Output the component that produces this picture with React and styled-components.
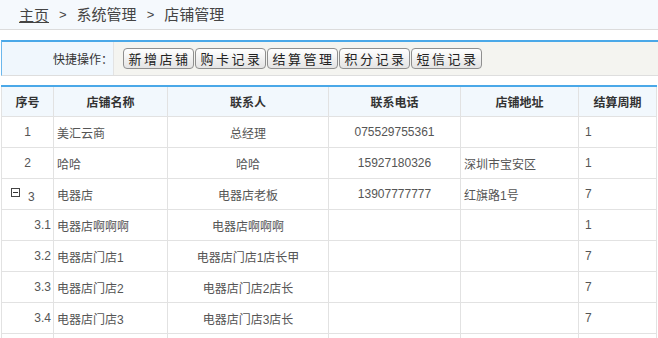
import React from 'react';
import styled, { createGlobalStyle } from 'styled-components';

const GlobalStyle = createGlobalStyle`
  body {
    margin: 0;
    background: #fff;
    font-family: 'Liberation Sans', 'Noto Sans CJK SC', sans-serif;
    color: #555;
  }
`;

const stores = [
  { no: '1', name: '美汇云商', contact: '总经理', phone: '075529755361', address: '', cycle: '1' },
  { no: '2', name: '哈哈', contact: '哈哈', phone: '15927180326', address: '深圳市宝安区', cycle: '1' },
  { no: '3', name: '电器店', contact: '电器店老板', phone: '13907777777', address: '红旗路1号', cycle: '7', parent: true },
  { no: '3.1', name: '电器店啊啊啊', contact: '电器店啊啊啊', phone: '', address: '', cycle: '1', child: true },
  { no: '3.2', name: '电器店门店1', contact: '电器店门店1店长甲', phone: '', address: '', cycle: '7', child: true },
  { no: '3.3', name: '电器店门店2', contact: '电器店门店2店长', phone: '', address: '', cycle: '7', child: true },
  { no: '3.4', name: '电器店门店3', contact: '电器店门店3店长', phone: '', address: '', cycle: '7', child: true },
  { no: '', name: '', contact: '', phone: '', address: '', cycle: '', child: true },
];

const quickActions = ['新增店铺', '购卡记录', '结算管理', '积分记录', '短信记录'];

const App = () => {
  return (
    <>
      <GlobalStyle />
      <Breadcrumb>
        <HomeLink href="#">主页</HomeLink>
        <Sep>&gt;</Sep>
        <span>系统管理</span>
        <Sep>&gt;</Sep>
        <span>店铺管理</span>
      </Breadcrumb>
      <Content>
        <Toolbar>
          <ToolLabel>快捷操作：</ToolLabel>
          <ToolButtons>
            {quickActions.map((a) => (
              <ActionButton key={a}>{a}</ActionButton>
            ))}
          </ToolButtons>
        </Toolbar>
        <Table>
          <colgroup>
            <col style={{ width: 52 }} />
            <col style={{ width: 114 }} />
            <col style={{ width: 161 }} />
            <col style={{ width: 132 }} />
            <col style={{ width: 118 }} />
            <col />
          </colgroup>
          <thead>
            <tr>
              <Th>序号</Th>
              <Th>店铺名称</Th>
              <Th>联系人</Th>
              <Th>联系电话</Th>
              <Th>店铺地址</Th>
              <Th>结算周期</Th>
            </tr>
          </thead>
          <tbody>
            {stores.map((s, i) => (
              <tr key={i}>
                <NoCell $child={s.child} $parent={s.parent}>
                  {s.parent && <Collapse />}
                  {s.parent ? <Lowered>{s.no}</Lowered> : s.no}
                </NoCell>
                <Td $align="left">{s.name}</Td>
                <Td>{s.contact}</Td>
                <Td>{s.phone}</Td>
                <Td $align="left">{s.address}</Td>
                <Td $align="left" $pad="6px">{s.cycle}</Td>
              </tr>
            ))}
          </tbody>
        </Table>
      </Content>
    </>
  );
};

const Breadcrumb = styled.div`
  height: 29px;
  background: #f5f9fd;
  border-bottom: 1px solid #dcdcdc;
  padding-left: 19px;
  display: flex;
  align-items: center;
  gap: 10px;
  font-size: 15px;
  color: #444;
  span {
    line-height: 22px;
  }
`;
const HomeLink = styled.a`
  color: #444;
  text-decoration: underline;
`;
const Sep = styled.span`
  font-size: 13px;
`;
const Content = styled.div`
  padding: 10px 0 0 1px;
`;
const Toolbar = styled.div`
  display: flex;
  height: 33px;
  border-top: 2px solid #4aa8e8;
  border-left: 1px solid #6bb7ec;
  border-bottom: 1px solid #dedede;
  background: #f4f4f0;
`;
const ToolLabel = styled.div`
  width: 112px;
  flex-shrink: 0;
  background: #f0f7fd;
  border-right: 1px solid #e3e3e3;
  display: flex;
  align-items: center;
  justify-content: flex-end;
  padding-right: 0;
  box-sizing: border-box;
  font-family: 'Noto Sans CJK SC', sans-serif;
  font-size: 12px;
  color: #333;
`;
const ToolButtons = styled.div`
  display: flex;
  align-items: center;
  gap: 1px;
  padding-left: 9px;
`;
const ActionButton = styled.button`
  height: 21px;
  width: 71px;
  padding: 0;
  border: 1px solid #8f8f8f;
  border-radius: 4px;
  background: linear-gradient(#ffffff, #e4e4e4);
  font-family: 'Noto Sans CJK SC', sans-serif;
  font-size: 13px;
  letter-spacing: 2.5px;
  text-indent: 2px;
  color: #222;
  line-height: 19px;
`;
const Table = styled.table`
  margin-top: 9px;
  width: 656px;
  border-collapse: collapse;
  table-layout: fixed;
  border-top: 2px solid #4aa8e8;
  font-size: 12px;
`;
const Th = styled.th`
  height: 29px;
  padding: 0;
  background: #f2f8fd;
  border: 1px solid #e2e2e2;
  border-top: none;
  font-size: 12px;
  font-weight: bold;
  color: #333;
  text-align: center;
`;
const Td = styled.td`
  height: 30px;
  padding: 0 ${(p) => p.$pad || '3px'};
  border: 1px solid #e2e2e2;
  text-align: ${(p) => p.$align || 'center'};
  color: #555;
  white-space: nowrap;
`;
const NoCell = styled(Td)`
  text-align: ${(p) => (p.$child ? 'right' : p.$parent ? 'left' : 'center')};
  padding: ${(p) => (p.$parent ? '0 0 0 9px' : '0 2px')};
`;
const Collapse = styled.span`
  display: inline-block;
  width: 7px;
  height: 7px;
  border: 1px solid #444;
  position: relative;
  vertical-align: 1px;
  margin-right: 8px;
  &::after {
    content: '';
    position: absolute;
    left: 1px;
    right: 1px;
    top: 3px;
    height: 1px;
    background: #333;
  }
`;
const Lowered = styled.span`
  position: relative;
  top: 3px;
`;

export default App;
